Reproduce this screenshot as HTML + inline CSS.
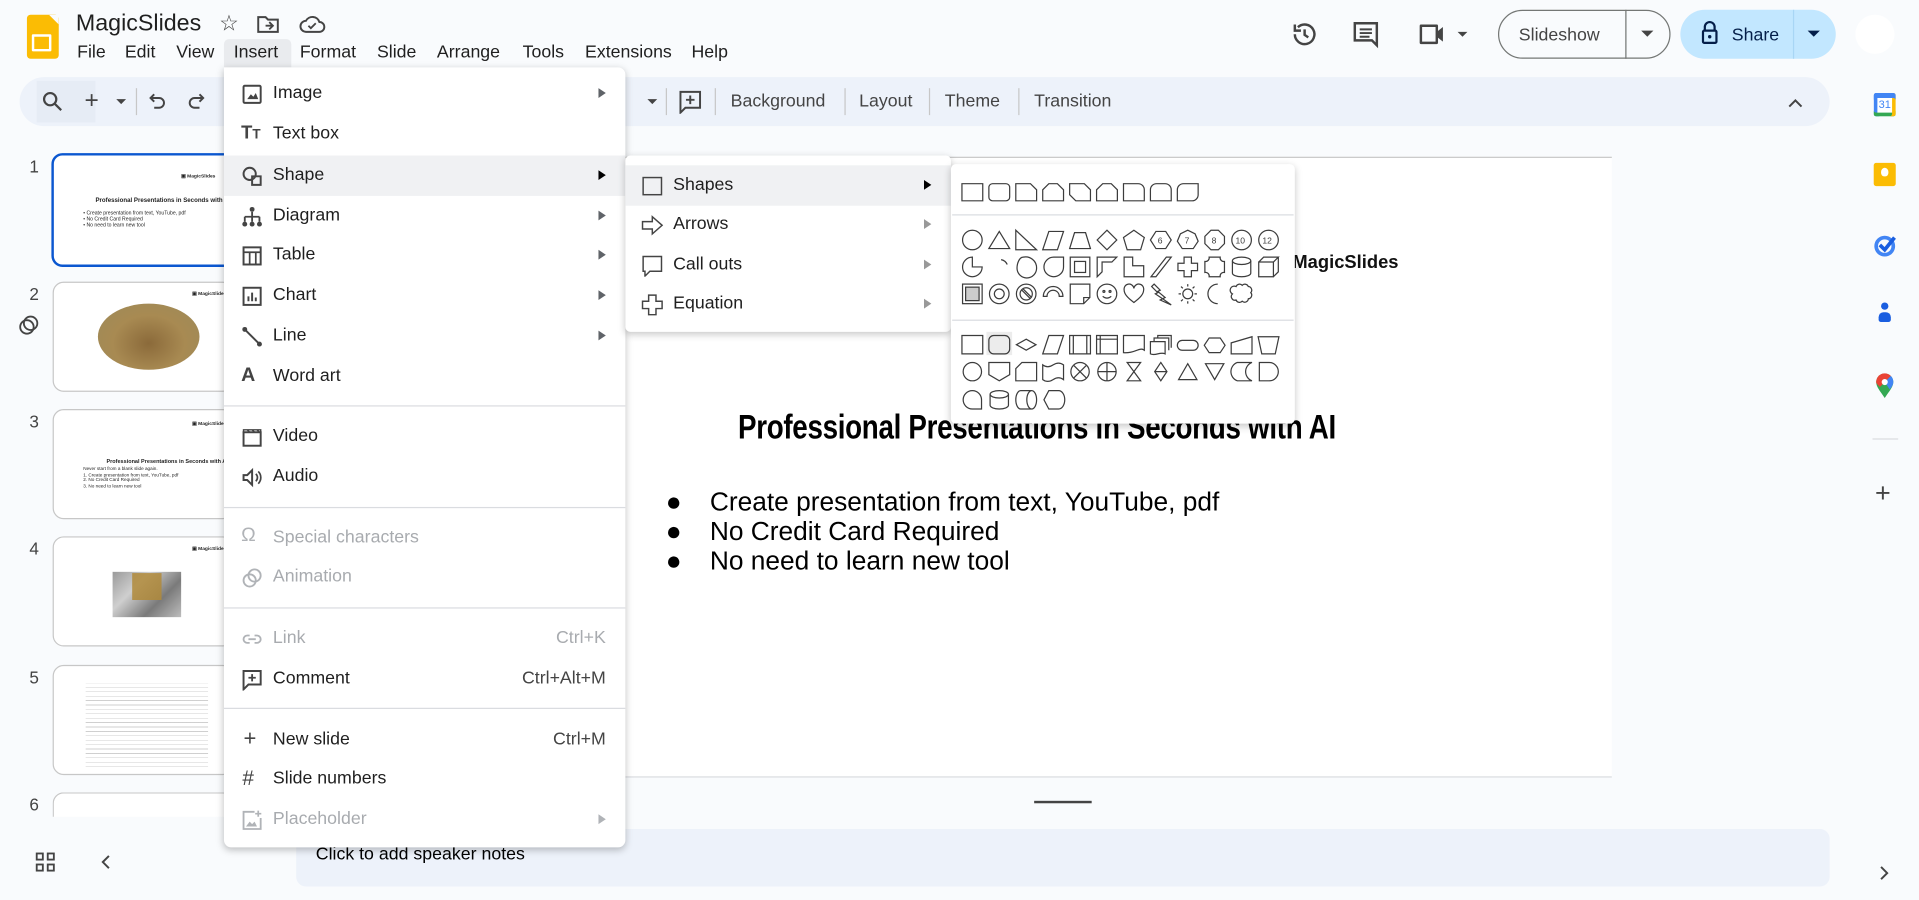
<!DOCTYPE html>
<html><head><meta charset="utf-8"><style>
html,body{margin:0;padding:0;width:1919px;height:900px;overflow:hidden;background:#f9fbfd;font-family:"Liberation Sans",Arial,sans-serif;color:#1f1f1f}
#w{position:absolute;left:0;top:0;width:1568px;height:735px;transform:scale(1.22385,1.2245);transform-origin:0 0;background:#f9fbfd}
.a{position:absolute}
.t{position:absolute;white-space:nowrap}
.mi{position:absolute;left:0;right:0;height:33px;font-size:14.5px}
.mi .l{position:absolute;left:40px;top:8px}
.mi .ic{position:absolute;left:14px;top:8px;width:18px;height:18px}
.mi .ar{position:absolute;right:16px;top:12px;width:0;height:0;border-left:6px solid #5f6368;border-top:4px solid transparent;border-bottom:4px solid transparent}
.mi .sc{position:absolute;right:16px;top:8px;color:#444}
.dis{color:#a8abaf}
.dv{position:absolute;left:0;right:0;height:1px;background:#dadce0}
.th{position:absolute;left:43px;width:146px;height:88px;background:#fff;border:1px solid #c7c7c7;border-radius:9px;overflow:hidden}
.num{position:absolute;left:24px;font-size:14px;color:#444}
svg.sh{position:absolute}
svg.sh *{fill:none;stroke:#3c3c3c;stroke-width:1}
svg.sh text{fill:#3c3c3c;stroke:none;font-size:7px;font-family:"Liberation Sans",sans-serif}
</style></head><body><div id="w">

<!-- header -->
<div class="a" style="left:22px;top:12px;width:26px;height:36px;background:#fbbc04;border-radius:3px"></div>
<div class="a" style="left:26px;top:28px;width:12px;height:10px;border:2px solid #fff;border-radius:1px"></div>
<div class="a" style="left:40px;top:12px;width:8px;height:8px;background:#f9fbfd;clip-path:polygon(0 0,100% 100%,100% 0)"></div>
<div class="t" style="left:62px;top:9px;font-size:19px">MagicSlides</div>
<div class="t" style="left:179px;top:9px;font-size:18px;color:#444">☆</div>
<svg class="a" style="left:209px;top:11px" width="20" height="18" viewBox="0 0 20 18"><path d="M2 3h6l2 2h8v10H2z" fill="none" stroke="#444" stroke-width="1.6"/><path d="M8 10h6M11 7l3 3-3 3" fill="none" stroke="#444" stroke-width="1.5"/></svg>
<svg class="a" style="left:244px;top:11px" width="22" height="18" viewBox="0 0 22 18"><path d="M6 15h11a4 4 0 0 0 0-8 6 6 0 0 0-11-1 4.5 4.5 0 0 0 0 9z" fill="none" stroke="#444" stroke-width="1.6"/><path d="M8 10l2 2 4-4" fill="none" stroke="#444" stroke-width="1.5"/></svg>
<div class="a" style="left:183px;top:32px;width:55px;height:23px;background:#e9ebee;border-radius:4px 4px 0 0"></div>
<div class="t" style="left:63px;top:35px;font-size:14.5px">File</div>
<div class="t" style="left:102px;top:35px;font-size:14.5px">Edit</div>
<div class="t" style="left:144px;top:35px;font-size:14.5px">View</div>
<div class="t" style="left:191px;top:35px;font-size:14.5px">Insert</div>
<div class="t" style="left:245px;top:35px;font-size:14.5px">Format</div>
<div class="t" style="left:308px;top:35px;font-size:14.5px">Slide</div>
<div class="t" style="left:357px;top:35px;font-size:14.5px">Arrange</div>
<div class="t" style="left:427px;top:35px;font-size:14.5px">Tools</div>
<div class="t" style="left:478px;top:35px;font-size:14.5px">Extensions</div>
<div class="t" style="left:565px;top:35px;font-size:14.5px">Help</div>

<svg class="a" style="left:1054px;top:16px" width="24" height="24" viewBox="0 0 24 24"><path d="M4 12a8 8 0 1 0 2.5-5.8M4 4v5h5M12 8v4.5l3 2" fill="none" stroke="#444" stroke-width="2"/></svg>
<svg class="a" style="left:1104px;top:16px" width="24" height="24" viewBox="0 0 24 24"><path d="M3 3h18v14h0v4l-4-4H3z" fill="none" stroke="#444" stroke-width="2"/><path d="M7 8h10M7 11h10M7 14h8" stroke="#444" stroke-width="1.6"/></svg>
<svg class="a" style="left:1158px;top:17px" width="42" height="22" viewBox="0 0 42 22"><path d="M3 4h13v14H3z" fill="none" stroke="#444" stroke-width="2" stroke-linejoin="round"/><path d="M16 9l5-4v12l-5-4" fill="#444"/><path d="M33 9h8l-4 4z" fill="#444"/></svg>
<div class="a" style="left:1224px;top:8px;width:139px;height:38px;border:1px solid #747775;border-radius:20px"></div>
<div class="a" style="left:1328px;top:8px;width:1px;height:40px;background:#747775"></div>
<div class="t" style="left:1241px;top:21px;font-size:14.5px;color:#444">Slideshow</div>
<div class="a" style="left:1341px;top:25px;border-top:5px solid #444;border-left:5px solid transparent;border-right:5px solid transparent"></div>
<div class="a" style="left:1373px;top:8px;width:127px;height:40px;background:#c2e7ff;border-radius:20px"></div>
<div class="a" style="left:1465px;top:8px;width:1px;height:40px;background:#a8d6f5"></div>
<svg class="a" style="left:1390px;top:17px" width="14" height="20" viewBox="0 0 14 20"><path d="M3 8V5a4 4 0 0 1 8 0v3" fill="none" stroke="#041e49" stroke-width="1.8"/><rect x="1.5" y="8" width="11" height="10" rx="1" fill="none" stroke="#041e49" stroke-width="1.8"/><circle cx="7" cy="13" r="1.4" fill="#041e49"/></svg>
<div class="t" style="left:1415px;top:21px;font-size:14.5px;color:#041e49">Share</div>
<div class="a" style="left:1477px;top:25px;border-top:5px solid #041e49;border-left:5px solid transparent;border-right:5px solid transparent"></div>
<div class="a" style="left:1516px;top:12px;width:32px;height:32px;border-radius:50%;background:#fff"></div>

<!-- toolbar -->
<div class="a" style="left:16px;top:63px;width:1479px;height:40px;background:#edf2fa;border-radius:20px"></div>
<div class="a" style="left:30px;top:66px;width:48px;height:34px;background:#e6ecf5"></div>
<svg class="a" style="left:34px;top:74px" width="18" height="18" viewBox="0 0 18 18"><circle cx="7" cy="7" r="5" fill="none" stroke="#444" stroke-width="1.8"/><path d="M11 11l5 5" stroke="#444" stroke-width="1.8"/></svg>
<div class="t" style="left:69px;top:71px;font-size:20px;color:#444">+</div>
<div class="a" style="left:95px;top:81px;border-top:4px solid #444;border-left:4px solid transparent;border-right:4px solid transparent"></div>
<div class="a" style="left:111px;top:72px;width:1px;height:22px;background:#c7c7c7"></div>
<svg class="a" style="left:121px;top:75px" width="16" height="16" viewBox="0 0 16 16"><path d="M5 2L2 5l3 3M2 5h7a4 4 0 0 1 0 8H5" fill="none" stroke="#444" stroke-width="1.6"/></svg>
<svg class="a" style="left:152px;top:75px" width="16" height="16" viewBox="0 0 16 16"><path d="M11 2l3 3-3 3M14 5H7a4 4 0 0 0 0 8h4" fill="none" stroke="#444" stroke-width="1.6"/></svg>
<div class="a" style="left:529px;top:81px;border-top:4px solid #444;border-left:4px solid transparent;border-right:4px solid transparent"></div>
<div class="a" style="left:544px;top:72px;width:1px;height:22px;background:#c7c7c7"></div>
<svg class="a" style="left:554px;top:73px" width="20" height="20" viewBox="0 0 20 20"><path d="M2 2h16v13H6l-4 4z" fill="none" stroke="#444" stroke-width="1.6"/><path d="M10 5v7M6.5 8.5h7" stroke="#444" stroke-width="1.6"/></svg>
<div class="a" style="left:584px;top:72px;width:1px;height:22px;background:#c7c7c7"></div>
<div class="t" style="left:597px;top:75px;font-size:14.5px;color:#444">Background</div>
<div class="a" style="left:690px;top:72px;width:1px;height:22px;background:#c7c7c7"></div>
<div class="t" style="left:702px;top:75px;font-size:14.5px;color:#444">Layout</div>
<div class="a" style="left:759px;top:72px;width:1px;height:22px;background:#c7c7c7"></div>
<div class="t" style="left:772px;top:75px;font-size:14.5px;color:#444">Theme</div>
<div class="a" style="left:832px;top:72px;width:1px;height:22px;background:#c7c7c7"></div>
<div class="t" style="left:845px;top:75px;font-size:14.5px;color:#444">Transition</div>
<svg class="a" style="left:1460px;top:79px" width="14" height="10" viewBox="0 0 14 10"><path d="M2 8l5-5 5 5" fill="none" stroke="#444" stroke-width="1.6"/></svg>

<!-- right sidebar -->
<div class="a" style="left:1531px;top:76px;width:18px;height:19px;background:#fff;box-shadow:inset 0 4px #4285f4,inset -3px 0 #fbbc04,inset 0 -3px #34a853,inset 3px 0 #4285f4;border-radius:2px"></div>
<div class="t" style="left:1535px;top:80px;font-size:9px;color:#4285f4">31</div>
<div class="a" style="left:1531px;top:133px;width:18px;height:19px;background:#fbbc04;border-radius:2px"></div>
<div class="a" style="left:1537px;top:137px;width:6px;height:7px;background:#fff;border-radius:50% 50% 40% 40%"></div>
<svg class="a" style="left:1530px;top:190px" width="20" height="20" viewBox="0 0 20 20"><circle cx="10" cy="11" r="7" fill="none" stroke="#4285f4" stroke-width="3"/><path d="M6 10l4 4 8-10" fill="none" stroke="#1a5ee0" stroke-width="3"/></svg>
<div class="a" style="left:1537px;top:247px;width:6px;height:6px;background:#1a5ee0;border-radius:50%"></div>
<div class="a" style="left:1535px;top:255px;width:10px;height:8px;background:#1a5ee0;border-radius:4px 4px 2px 2px"></div>
<svg class="a" style="left:1532px;top:304px" width="16" height="22" viewBox="0 0 16 22"><path d="M8 21C4 15 1 12 1 8a7 7 0 0 1 14 0c0 4-3 7-7 13z" fill="#34a853"/><path d="M1 8a7 7 0 0 1 12-5L4 12C2 10 1 9 1 8z" fill="#ea4335"/><path d="M13 3a7 7 0 0 1 2 5c0 2-1 4-3 6L8 8z" fill="#4285f4"/><circle cx="8" cy="8" r="2.5" fill="#fff"/></svg>
<div class="a" style="left:1530px;top:358px;width:21px;height:1px;background:#dadce0"></div>
<div class="t" style="left:1532px;top:390px;font-size:22px;color:#444">+</div>
<svg class="a" style="left:1535px;top:706px" width="10" height="14" viewBox="0 0 10 14"><path d="M2 2l5 5-5 5" fill="none" stroke="#444" stroke-width="1.6"/></svg>

<!-- canvas -->
<div class="a" style="left:242px;top:128px;width:1075px;height:1px;background:#c7c7c7"></div>
<div class="a" style="left:242px;top:129px;width:1075px;height:505px;background:#fff;border-bottom:1px solid #dadce0"></div>
<div class="t" style="left:1056px;top:206px;font-size:15px;font-weight:bold;color:#111">MagicSlides</div>
<div class="t" style="left:603px;top:333px;font-size:28px;font-weight:bold;color:#000;transform:scaleX(0.81);transform-origin:0 0;letter-spacing:-0.3px">Professional Presentations in Seconds with AI</div>
<div class="t" style="left:544px;top:398px;font-size:21.5px;line-height:24px;color:#000">●<br>●<br>●</div>
<div class="t" style="left:580px;top:398px;font-size:21.5px;line-height:24px;color:#000">Create presentation from text, YouTube, pdf<br>No Credit Card Required<br>No need to learn new tool</div>
<div class="a" style="left:845px;top:654px;width:47px;height:2px;background:#444"></div>
<div class="a" style="left:242px;top:677px;width:1253px;height:47px;background:#edf2fa;border-radius:8px"></div>
<div class="t" style="left:258px;top:690px;font-size:14.5px;color:#000">Click to add speaker notes</div>

<!-- thumbnails -->
<div class="num" style="top:128px">1</div>
<div class="th" style="top:125px;border:2px solid #0b57d0;left:42px;width:146px;height:89px">
 <div class="t" style="left:104px;top:14px;font-size:4px;font-weight:bold">▣ MagicSlides</div>
 <div class="t" style="left:34px;top:34px;font-size:5px;font-weight:bold">Professional Presentations in Seconds with AI</div>
 <div class="t" style="left:24px;top:44px;font-size:4.2px;line-height:5px">• Create presentation from text, YouTube, pdf<br>• No Credit Card Required<br>• No need to learn new tool</div>
</div>
<div class="num" style="top:232px">2</div>
<svg class="a" style="left:14px;top:256px" width="20" height="20" viewBox="0 0 20 20"><circle cx="8" cy="11" r="5.5" fill="none" stroke="#444" stroke-width="1.5"/><circle cx="11" cy="8" r="5.5" fill="none" stroke="#444" stroke-width="1.5"/></svg>
<div class="th" style="top:230px">
 <div class="t" style="left:113px;top:6px;font-size:4px;font-weight:bold">▣ MagicSlides</div>
 <div class="a" style="left:36px;top:17px;width:83px;height:54px;border-radius:50%;background:radial-gradient(ellipse at 50% 60%,#8b6a3a,#a88a52 50%,#9c8a5a)"></div>
</div>
<div class="num" style="top:336px">3</div>
<div class="th" style="top:334px">
 <div class="t" style="left:113px;top:8px;font-size:4px;font-weight:bold">▣ MagicSlides</div>
 <div class="t" style="left:43px;top:39px;font-size:4.5px;font-weight:bold">Professional Presentations in Seconds with AI</div>
 <div class="t" style="left:24px;top:46px;font-size:3.8px;line-height:4.5px">Never start from a blank slide again.<br>1. Create presentation from text, YouTube, pdf<br>2. No Credit Card Required<br>3. No need to learn new tool</div>
</div>
<div class="num" style="top:440px">4</div>
<div class="th" style="top:438px">
 <div class="t" style="left:113px;top:6px;font-size:4px;font-weight:bold">▣ MagicSlides</div>
 <div class="a" style="left:48px;top:28px;width:56px;height:37px;background:linear-gradient(135deg,#9a9a9a,#cfcfcf,#7a7a7a,#bdbdbd)"></div>
 <div class="a" style="left:64px;top:29px;width:24px;height:22px;background:#b08a3a;opacity:.85"></div>
</div>
<div class="num" style="top:545px">5</div>
<div class="th" style="top:543px">
 <div class="a" style="left:26px;top:14px;width:100px;height:70px;background:repeating-linear-gradient(#fff 0,#fff 3px,#bbb 3px,#bbb 3.6px);opacity:.7"></div>
</div>
<div class="num" style="top:649px">6</div>
<div class="th" style="top:647px;height:20px;border-bottom:0;border-radius:9px 9px 0 0"></div>
<div class="a" style="left:0;top:667px;width:240px;height:68px;background:#f9fbfd"></div>
<svg class="a" style="left:29px;top:696px" width="16" height="16" viewBox="0 0 16 16"><g fill="none" stroke="#444" stroke-width="1.5"><rect x="1" y="1" width="5" height="5"/><rect x="10" y="1" width="5" height="5"/><rect x="1" y="10" width="5" height="5"/><rect x="10" y="10" width="5" height="5"/></g></svg>
<svg class="a" style="left:81px;top:697px" width="10" height="14" viewBox="0 0 10 14"><path d="M8 2L3 7l5 5" fill="none" stroke="#444" stroke-width="1.6"/></svg>

<!-- Insert menu -->
<div class="a" style="left:183px;top:55px;width:328px;height:637px;background:#fff;border-radius:0 6px 6px 6px;box-shadow:0 2px 6px rgba(0,0,0,.25)">
 <div class="mi" style="top:5px"><svg class="ic" viewBox="0 0 18 18"><rect x="2" y="2" width="14" height="14" rx="1" fill="none" stroke="#444" stroke-width="1.6"/><path d="M5 13l3-4 2 2 2-3 2 5z" fill="#444"/></svg><span class="l">Image</span><i class="ar"></i></div>
 <div class="mi" style="top:38px"><span class="ic" style="font-size:15px;font-weight:bold;color:#444;top:7px">T<span style="font-size:11px">T</span></span><span class="l">Text box</span></div>
 <div class="mi" style="top:72px;background:#f0f1f3"><svg class="ic" viewBox="0 0 18 18"><circle cx="7" cy="7" r="5" fill="none" stroke="#444" stroke-width="1.6"/><path d="M9 9h7v7H9z" fill="none" stroke="#444" stroke-width="1.6"/></svg><span class="l">Shape</span><i class="ar" style="border-left-color:#000"></i></div>
 <div class="mi" style="top:105px"><svg class="ic" viewBox="0 0 18 18"><circle cx="9" cy="3" r="2" fill="#444"/><path d="M9 5v4M3 9h12M3 9v4M9 9v4M15 9v4" stroke="#444" stroke-width="1.5" fill="none"/><circle cx="3" cy="15" r="2" fill="#444"/><circle cx="9" cy="15" r="2" fill="#444"/><circle cx="15" cy="15" r="2" fill="#444"/></svg><span class="l">Diagram</span><i class="ar"></i></div>
 <div class="mi" style="top:137px"><svg class="ic" viewBox="0 0 18 18"><rect x="2" y="2" width="14" height="14" fill="none" stroke="#444" stroke-width="1.6"/><path d="M2 6h14M7 6v10M12 6v10" stroke="#444" stroke-width="1.4"/></svg><span class="l">Table</span><i class="ar"></i></div>
 <div class="mi" style="top:170px"><svg class="ic" viewBox="0 0 18 18"><rect x="2" y="2" width="14" height="14" fill="none" stroke="#444" stroke-width="1.6"/><path d="M6 13V9M9 13V6M12 13v-3" stroke="#444" stroke-width="1.6"/></svg><span class="l">Chart</span><i class="ar"></i></div>
 <div class="mi" style="top:203px"><svg class="ic" viewBox="0 0 18 18"><path d="M3 3l12 12" stroke="#444" stroke-width="1.6"/><circle cx="3" cy="3" r="2" fill="#444"/><circle cx="15" cy="15" r="2" fill="#444"/></svg><span class="l">Line</span><i class="ar"></i></div>
 <div class="mi" style="top:236px"><span class="ic" style="font-size:16px;font-weight:bold;color:#444;top:7px">A</span><span class="l">Word art</span></div>
 <div class="dv" style="top:276px"></div>
 <div class="mi" style="top:285px"><svg class="ic" viewBox="0 0 18 18"><rect x="2" y="5" width="14" height="11" fill="none" stroke="#444" stroke-width="1.6"/><path d="M2 3h14v2H2zM5 3l2 2M9 3l2 2M13 3l2 2" stroke="#444" stroke-width="1.2" fill="none"/></svg><span class="l">Video</span></div>
 <div class="mi" style="top:318px"><svg class="ic" viewBox="0 0 18 18"><path d="M2 7h3l4-4v12l-4-4H2z" fill="none" stroke="#444" stroke-width="1.6"/><path d="M12 6a4 4 0 0 1 0 6M14 4a7 7 0 0 1 0 10" fill="none" stroke="#444" stroke-width="1.4"/></svg><span class="l">Audio</span></div>
 <div class="dv" style="top:359px"></div>
 <div class="mi dis" style="top:368px"><span class="ic" style="font-size:16px;color:#b0b3b7;top:6px">Ω</span><span class="l">Special characters</span></div>
 <div class="mi dis" style="top:400px"><svg class="ic" viewBox="0 0 18 18"><circle cx="7" cy="11" r="5" fill="none" stroke="#b0b3b7" stroke-width="1.5"/><circle cx="11" cy="7" r="5" fill="none" stroke="#b0b3b7" stroke-width="1.5"/></svg><span class="l">Animation</span></div>
 <div class="dv" style="top:441px"></div>
 <div class="mi dis" style="top:450px"><svg class="ic" viewBox="0 0 18 18"><path d="M7 6H5a3 3 0 0 0 0 6h2M11 6h2a3 3 0 0 1 0 6h-2M6 9h6" fill="none" stroke="#b0b3b7" stroke-width="1.5"/></svg><span class="l">Link</span><span class="sc" style="color:#a8abaf">Ctrl+K</span></div>
 <div class="mi" style="top:483px"><svg class="ic" viewBox="0 0 18 18"><path d="M2 2h14v11H6l-4 4z" fill="none" stroke="#444" stroke-width="1.6"/><path d="M9 4.5v6M6 7.5h6" stroke="#444" stroke-width="1.5"/></svg><span class="l">Comment</span><span class="sc">Ctrl+Alt+M</span></div>
 <div class="dv" style="top:523px"></div>
 <div class="mi" style="top:533px"><span class="ic" style="font-size:18px;color:#444;top:5px;left:16px">+</span><span class="l">New slide</span><span class="sc">Ctrl+M</span></div>
 <div class="mi" style="top:565px"><span class="ic" style="font-size:17px;color:#444;top:6px;left:15px">#</span><span class="l">Slide numbers</span></div>
 <div class="mi dis" style="top:598px"><svg class="ic" viewBox="0 0 18 18"><path d="M11 2H2v14h14V7" fill="none" stroke="#b0b3b7" stroke-width="1.5"/><path d="M14 1v5M11.5 3.5h5" stroke="#b0b3b7" stroke-width="1.4"/><path d="M4 14l3-4 2 2 2-2 2 4z" fill="#b0b3b7"/></svg><span class="l">Placeholder</span><i class="ar" style="border-left-color:#b0b3b7"></i></div>
</div>

<!-- Shape submenu -->
<div class="a" style="left:511px;top:127px;width:266px;height:144px;background:#fff;border-radius:4px;box-shadow:0 2px 6px rgba(0,0,0,.22)">
 <div class="mi" style="top:8px;background:#f0f1f3"><svg class="ic" style="left:13px" viewBox="0 0 18 18"><rect x="1.5" y="2" width="15" height="14" fill="none" stroke="#444" stroke-width="1.2"/></svg><span class="l" style="left:39px">Shapes</span><i class="ar" style="border-left-color:#000"></i></div>
 <div class="mi" style="top:40px"><svg class="ic" style="left:13px" viewBox="0 0 18 18"><path d="M1 6h8V2l8 7-8 7v-4H1z" fill="none" stroke="#444" stroke-width="1.2"/></svg><span class="l" style="left:39px">Arrows</span><i class="ar" style="border-left-color:#999"></i></div>
 <div class="mi" style="top:73px"><svg class="ic" style="left:13px" viewBox="0 0 18 18"><path d="M1.5 1.5h15v12H7l-4 4v-4H1.5z" fill="none" stroke="#444" stroke-width="1.2"/></svg><span class="l" style="left:39px">Call outs</span><i class="ar" style="border-left-color:#999"></i></div>
 <div class="mi" style="top:105px"><svg class="ic" style="left:13px" viewBox="0 0 18 18"><path d="M6 1h6v5h5v6h-5v5H6v-5H1V6h5z" fill="none" stroke="#444" stroke-width="1.2"/></svg><span class="l" style="left:39px">Equation</span><i class="ar" style="border-left-color:#999"></i></div>
</div>

<!-- Shapes palette -->
<div class="a" style="left:777px;top:134px;width:281px;height:212px;background:#fff;border-radius:4px;box-shadow:0 2px 6px rgba(0,0,0,.22)">
 <div class="dv" style="top:41px;left:1px;right:1px"></div>
 <div class="dv" style="top:127px;left:1px;right:1px"></div>
 <div class="a" style="left:29px;top:137px;width:21px;height:19px;background:#ececec"></div>
</div>
<svg class="sh" style="left:785px;top:147px" width="270" height="20" viewBox="0 0 270 20">
 <g transform="translate(1,1)"><path d="M0 2h17v14H0z"/></g>
 <g transform="translate(23,1)"><rect x="0" y="2" width="17" height="14" rx="3"/></g>
 <g transform="translate(45,1)"><path d="M0 2h12l5 5v9H0z"/></g>
 <g transform="translate(67,1)"><path d="M5 2h7l5 5v9H0V7z"/></g>
 <g transform="translate(89,1)"><path d="M0 2h12l5 5v9H5L0 11z"/></g>
 <g transform="translate(111,1)"><path d="M5 2h7l5 5v9H0V7z"/></g>
 <g transform="translate(133,1)"><path d="M0 2h12a5 5 0 0 1 5 5v9H0z"/></g>
 <g transform="translate(155,1)"><path d="M5 2h7a5 5 0 0 1 5 5v9H0V7a5 5 0 0 1 5-5z"/></g>
 <g transform="translate(177,1)"><path d="M5 2h12v9a5 5 0 0 1-5 5H0V7a5 5 0 0 1 5-5z"/></g>
</svg>
<svg class="sh" style="left:785px;top:186px" width="270" height="66" viewBox="0 0 270 66">
 <g transform="translate(1,1)"><circle cx="8.5" cy="9" r="8"/></g>
 <g transform="translate(23,1)"><path d="M8.5 2L17 16H0z"/></g>
 <g transform="translate(45,1)"><path d="M0 1L17 17H0z"/></g>
 <g transform="translate(67,1)"><path d="M5 2h12l-5 15H0z"/></g>
 <g transform="translate(89,1)"><path d="M4 3h9l4 13H0z"/></g>
 <g transform="translate(111,1)"><path d="M8.5 1l8 8-8 8-8-8z"/></g>
 <g transform="translate(133,1)"><path d="M8.5 1l8.5 6-3 10H3L0 7z"/></g>
 <g transform="translate(155,1)"><path d="M4.5 2h8l4.5 7-4.5 7h-8L0 9z"/><text x="6" y="12">6</text></g>
 <g transform="translate(177,1)"><path d="M8.5 1l6 3 2.5 6-4 6H4L0 10l2.5-6z"/><text x="6" y="12">7</text></g>
 <g transform="translate(199,1)"><path d="M5.5 1h6l5 5v6l-5 5h-6l-5-5V6z"/><text x="6" y="12">8</text></g>
 <g transform="translate(221,1)"><circle cx="8.5" cy="9" r="8"/><text x="3.5" y="12">10</text></g>
 <g transform="translate(243,1)"><circle cx="8.5" cy="9" r="8"/><text x="3.5" y="12">12</text></g>
 <g transform="translate(0,23)">
  <g transform="translate(1,0)"><path d="M8.5 9V1A8 8 0 1 0 16.5 9z"/></g>
  <g transform="translate(23,0)"><path d="M10 3a7 7 0 0 1 5 4"/></g>
  <g transform="translate(45,0)"><path d="M6 1h0a9 9 0 0 1 11 9 8 8 0 0 1-16 0c0-4 2-9 5-9z"/></g>
  <g transform="translate(67,0)"><path d="M17 1v8a8 8 0 1 1-8-8z"/></g>
  <g transform="translate(89,0)"><rect x="0.5" y="1" width="16" height="16"/><rect x="4" y="4.5" width="9" height="9"/></g>
  <g transform="translate(111,0)"><path d="M0.5 1h16l-4 4H4.5v8l-4 4z"/></g>
  <g transform="translate(133,0)"><path d="M0.5 1h7v7h9v9h-16z"/></g>
  <g transform="translate(155,0)"><path d="M0.5 17L13 1h4L4.5 17z"/></g>
  <g transform="translate(177,0)"><path d="M5.5 1h6v5h5v6h-5v5h-6v-5h-5V6h5z"/></g>
  <g transform="translate(199,0)"><path d="M4 1h9a3 3 0 0 0 3.5 3.5v9A3 3 0 0 0 13 17H4A3 3 0 0 0 .5 13.5v-9A3 3 0 0 0 4 1z"/></g>
  <g transform="translate(221,0)"><ellipse cx="8.5" cy="4" rx="7.5" ry="3"/><path d="M1 4v10a7.5 3 0 0 0 15 0V4"/></g>
  <g transform="translate(243,0)"><path d="M0.5 5h12v12H.5zM.5 5l4-4h12l-4 4M12.5 17l4-4V1"/></g>
 </g>
 <g transform="translate(0,45)">
  <g transform="translate(1,0)"><rect x=".5" y="1" width="16" height="16"/><rect x="3" y="3.5" width="11" height="11" style="fill:#ccc"/></g>
  <g transform="translate(23,0)"><circle cx="8.5" cy="9" r="8"/><circle cx="8.5" cy="9" r="4"/></g>
  <g transform="translate(45,0)"><circle cx="8.5" cy="9" r="8"/><circle cx="8.5" cy="9" r="5"/><path d="M5 6l7 7M6 5l7 7"/></g>
  <g transform="translate(67,0)"><path d="M.5 11a8 8 0 0 1 16 0h-3a5 5 0 0 0-10 0z"/></g>
  <g transform="translate(89,0)"><path d="M.5 1h16v11l-5 5H.5zM11.5 17v-5h5"/></g>
  <g transform="translate(111,0)"><circle cx="8.5" cy="9" r="8"/><circle cx="6" cy="7" r=".8"/><circle cx="11" cy="7" r=".8"/><path d="M5 11q3.5 3 7 0"/></g>
  <g transform="translate(133,0)"><path d="M8.5 16C3 12 .5 9 .5 5.5a4 4 0 0 1 8-1 4 4 0 0 1 8 1C16.5 9 14 12 8.5 16z"/></g>
  <g transform="translate(155,0)"><path d="M3 1l5 5-2 1 6 5-2 1 7 5-9-4 2-1-6-4 2-1L1 3z"/></g>
  <g transform="translate(177,0)"><circle cx="8.5" cy="9" r="4"/><path d="M8.5 1v2M8.5 15v2M1 9h2M14 9h2M3 3l1.5 1.5M12.5 13.5L14 15M3 15l1.5-1.5M12.5 4.5L14 3"/></g>
  <g transform="translate(199,0)"><path d="M11 1a8 8 0 0 0 0 16 6 6 0 0 1 0-16z"/></g>
  <g transform="translate(221,0)"><path d="M4 3a3 3 0 0 1 5-1 3 3 0 0 1 5 1 3 3 0 0 1 2 5 3 3 0 0 1-2 5 3 3 0 0 1-5 2 3 3 0 0 1-5-1 3 3 0 0 1-3-5 3 3 0 0 1 3-6z"/></g>
 </g>
</svg>
<svg class="sh" style="left:785px;top:272px" width="270" height="66" viewBox="0 0 270 66">
 <g transform="translate(1,1)"><path d="M0 1h17v15H0z"/></g>
 <g transform="translate(23,1)"><rect x="0" y="1" width="17" height="15" rx="4"/></g>
 <g transform="translate(45,1)"><path d="M8.5 4l8 4.5-8 4.5-8-4.5z"/></g>
 <g transform="translate(67,1)"><path d="M5 1h12l-5 15H0z"/></g>
 <g transform="translate(89,1)"><path d="M0 1h17v15H0zM3 1v15M14 1v15"/></g>
 <g transform="translate(111,1)"><path d="M0 1h17v15H0zM3 1v15M0 4h17"/></g>
 <g transform="translate(133,1)"><path d="M0 1h17v12c-4-3-8 3-17 2z"/></g>
 <g transform="translate(155,1)"><path d="M0 6h12v10c-4-2-8 2-12 0zM3 6V3h12v10M6 3V1h11v10"/></g>
 <g transform="translate(177,1)"><rect x="0" y="5" width="17" height="8" rx="4"/></g>
 <g transform="translate(199,1)"><path d="M4 3h9l4 6-4 6H4L0 9z"/></g>
 <g transform="translate(221,1)"><path d="M0 7l17-5v14H0z"/></g>
 <g transform="translate(243,1)"><path d="M0 2h17l-3 14H3z"/></g>
 <g transform="translate(0,22)">
  <g transform="translate(1,1)"><circle cx="8.5" cy="8.5" r="7.5"/></g>
  <g transform="translate(23,1)"><path d="M0 1h17v10l-8.5 5L0 11z"/></g>
  <g transform="translate(45,1)"><path d="M5 1h12v15H0V6z"/></g>
  <g transform="translate(67,1)"><path d="M0 3q4 3 8.5 0t8.5 0v12q-4-3-8.5 0T0 15z"/></g>
  <g transform="translate(89,1)"><circle cx="8.5" cy="8.5" r="7.5"/><path d="M3.5 3.5l10 10M13.5 3.5l-10 10"/></g>
  <g transform="translate(111,1)"><circle cx="8.5" cy="8.5" r="7.5"/><path d="M8.5 1v15M1 8.5h15"/></g>
  <g transform="translate(133,1)"><path d="M3 1h11L3 16h11z"/></g>
  <g transform="translate(155,1)"><path d="M8.5 1l5 7.5-5 7.5-5-7.5zM3.5 8.5h10"/></g>
  <g transform="translate(177,1)"><path d="M8.5 2L16 15H1z"/></g>
  <g transform="translate(199,1)"><path d="M1 2h15L8.5 15z"/></g>
  <g transform="translate(221,1)"><path d="M5 1h12a8 8 0 0 0 0 15H5a8 8 0 0 1 0-15z"/></g>
  <g transform="translate(243,1)"><path d="M1 1h8a7.5 7.5 0 0 1 0 15H1z"/></g>
 </g>
 <g transform="translate(0,45)">
  <g transform="translate(1,1)"><path d="M8.5 16a7.5 7.5 0 1 1 7.5-7.5V16z"/></g>
  <g transform="translate(23,1)"><ellipse cx="8.5" cy="4" rx="7.5" ry="3"/><path d="M1 4v9a7.5 3 0 0 0 15 0V4"/></g>
  <g transform="translate(45,1)"><path d="M4 1h9a4 7.5 0 0 1 0 15H4a4 7.5 0 0 1 0-15zM13 1a4 7.5 0 0 0 0 15"/></g>
  <g transform="translate(67,1)"><path d="M5 1h8a5 7.5 0 0 1 0 15H5L1 8.5z"/></g>
 </g>
</svg>

</div></body></html>
